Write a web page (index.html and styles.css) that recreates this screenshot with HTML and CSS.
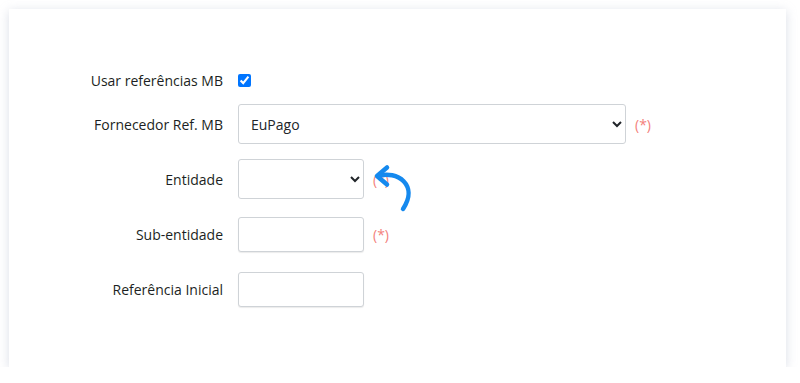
FILE: index.html
```
<!DOCTYPE html>
<html>
	<head>
		<title>Referências MB</title>
		<link rel="stylesheet" href="styles.css">
	</head>
	<body>
		<div class="card">
			<div class="form-row check">
				<label for="useMb">Usar referências MB</label>
				<input type="checkbox" id="useMb" checked />
			</div>

			<div class="form-row">
				<label for="provider">Fornecedor Ref. MB</label>
				<select id="provider" class="wide">
					<option>EuPago</option>
				</select>
				<span class="req">(*)</span>
			</div>

			<div class="form-row">
				<label for="entity">Entidade</label>
				<select id="entity" class="short">
					<option></option>
				</select>
				<span class="req">(*)</span>
				<!-- seta a apontar para o campo -->
				<svg class="hint-arrow" width="46" height="52" viewBox="0 0 46 52">
					<path d="M6 14 C 25 8, 47 23, 31 47" fill="none" stroke="#1589ee" stroke-width="4.5" stroke-linecap="round" />
					<path d="M15 5.5 L 5 14 L 15 22.5" fill="none" stroke="#1589ee" stroke-width="4.5" stroke-linecap="round" stroke-linejoin="round" />
				</svg>
			</div>

			<div class="form-row">
				<label for="subEntity">Sub-entidade</label>
				<input type="text" id="subEntity" class="short" />
				<span class="req">(*)</span>
			</div>

			<div class="form-row">
				<label for="startRef">Referência Inicial</label>
				<input type="text" id="startRef" class="short" />
			</div>
		</div>
	</body>
</html>
```

FILE: styles.css
```
body {
	margin: 0;
	padding: 0;
	background-color: #fff;
	font-family: "Open Sans", "Noto Sans", sans-serif;
	font-size: 14px;
	color: #1c1f23;
}

.card {
	margin: 9px 14px 0 9px;
	height: 358px;
	box-sizing: border-box;
	padding-top: 58px;
	background-color: #fff;
	box-shadow: 0 2px 10px rgba(150, 160, 185, 0.35);
}

.form-row {
	position: relative;
	display: flex;
	align-items: center;
	min-height: 40px;
	margin-bottom: 15px;
}

.form-row.check {
	min-height: 26px;
	margin-bottom: 11px;
}

.form-row label {
	width: 214px;
	flex-shrink: 0;
	text-align: right;
	margin-right: 15px;
}

.form-row input[type="checkbox"] {
	width: 13px;
	height: 13px;
	margin: 0;
}

select,
input[type="text"] {
	box-sizing: border-box;
	border: 1px solid #cfd3d7;
	border-radius: 3px;
	background-color: #fff;
	font-family: "Open Sans", "Noto Sans", sans-serif;
	font-size: 14px;
	color: #212529;
	margin: 0;
}

select {
	height: 40px;
	padding: 0 4px 0 8px;
}

input[type="text"] {
	height: 35px;
	padding: 0 8px;
	box-shadow: 0 1px 1px rgba(0, 0, 0, 0.08);
}

.wide {
	width: 388px;
}

.short {
	width: 126px;
}

.req {
	margin-left: 9px;
	color: #f3807b;
}

.hint-arrow {
	position: absolute;
	left: 363px;
	top: 3px;
}
```
